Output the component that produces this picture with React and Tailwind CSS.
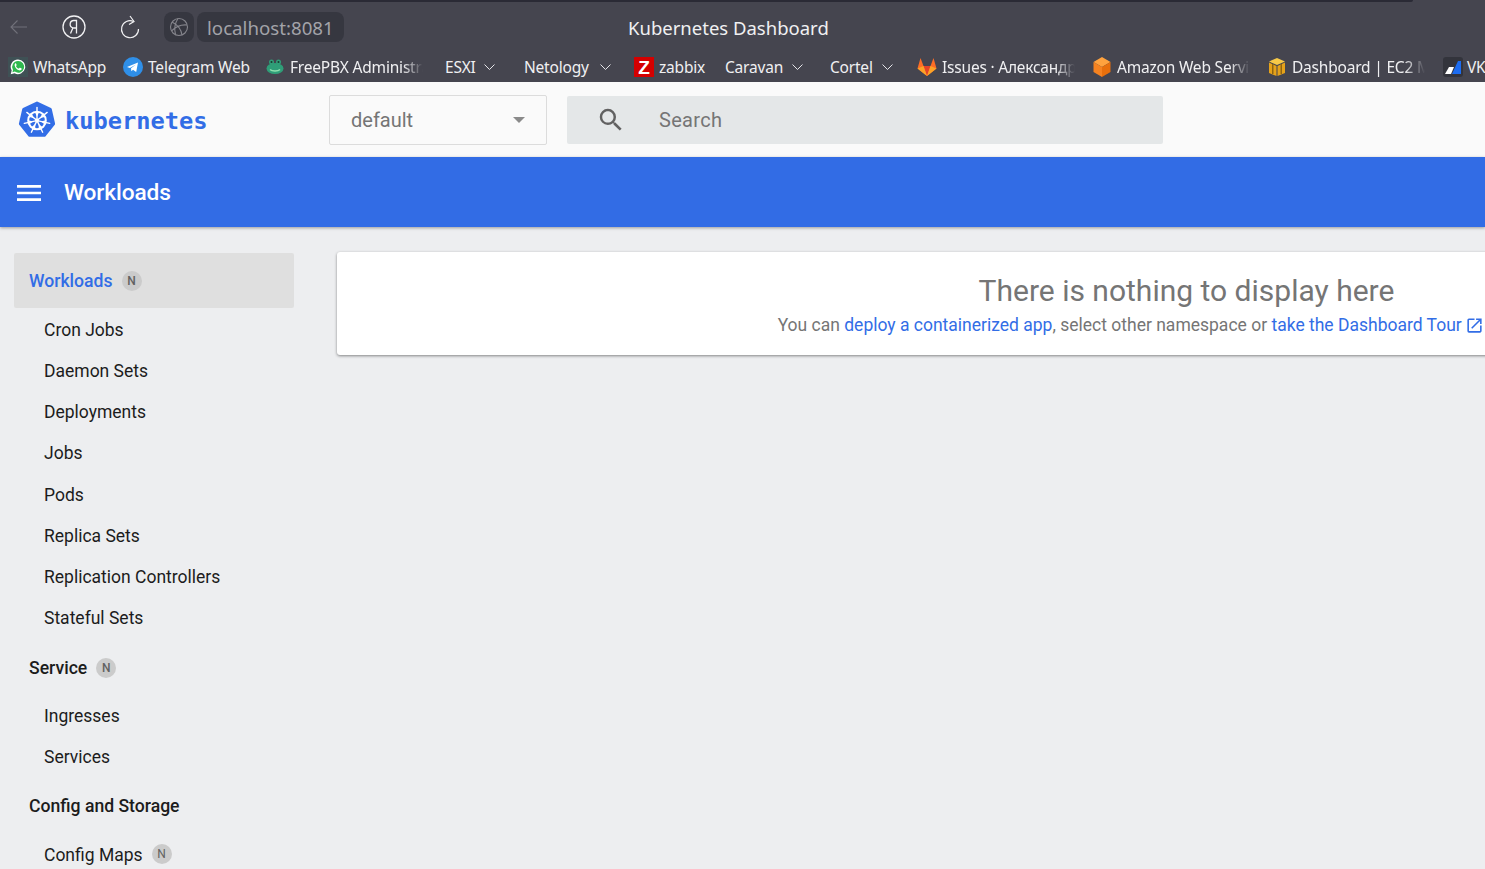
import { MdMenu, MdOpenInNew, MdSearch } from "react-icons/md";

const chromeFont = "font-['Noto_Sans','Open_Sans',sans-serif]";

function WhatsAppIcon() {
  return (
    <svg width="20" height="20" viewBox="0 0 20 20" className="shrink-0 mr-[5px]">
      <rect width="20" height="20" fill="#3f5155" />
      <path d="M10 2.500a7.300 7.300 0 0 0-6.300 11L2.700 17.300l3.900-1A7.300 7.300 0 1 0 10 2.500z" fill="#fff" />
      <path d="M10 3.900a5.900 5.900 0 0 0-5 9l-.6 2.300 2.400-.6A5.900 5.900 0 1 0 10 3.900z" fill="#2fb84f" />
      <path d="M7.600 6.300c-.7.3-1.200 1.300-.8 2.600.6 1.900 2.300 3.800 4.200 4.400 1.300.4 2.400-.2 2.600-1 .1-.4.1-.7 0-.8l-1.500-.8c-.2-.1-.4 0-.5.1l-.6.7c-.1.1-.3.2-.5.1-1-.4-2-1.300-2.500-2.300-.1-.2 0-.3.1-.4l.5-.6c.1-.2.1-.3 0-.5l-.6-1.400c-.1-.2-.2-.2-.4-.2z" fill="#fff" />
    </svg>
  );
}

function TelegramIcon() {
  return (
    <svg width="20" height="20" viewBox="0 0 20 20" className="shrink-0 mr-[5px]">
      <circle cx="10" cy="10" r="10" fill="#2f8fe8" />
      <path d="M4 10l11-4.500-1.800 9.500-3.200-2.300-1.600 1.600-.4-3L13 7.500 6.900 11z" fill="#fff" />
    </svg>
  );
}

function FrogIcon() {
  return (
    <svg width="20" height="20" viewBox="0 0 20 20" className="shrink-0 mr-[5px]">
      <ellipse cx="10" cy="11.500" rx="8.500" ry="5.500" fill="#2f9e78" />
      <circle cx="6.500" cy="5" r="2.500" fill="#2f9e78" />
      <circle cx="13.500" cy="5" r="2.500" fill="#2f9e78" />
      <circle cx="6.500" cy="5" r="1" fill="#173c30" />
      <circle cx="13.500" cy="5" r="1" fill="#173c30" />
      <path d="M5 12.500c2 2 8 2 10 0" stroke="#8fe0b0" strokeWidth="1.500" fill="none" />
    </svg>
  );
}

function ZabbixIcon() {
  return (
    <div className="w-5 h-5 shrink-0 mr-[5px] bg-[#d40000] flex items-center justify-center text-white font-bold text-[19px] leading-none font-['Liberation_Sans',sans-serif]">
      Z
    </div>
  );
}

function GitlabIcon() {
  return (
    <svg width="20" height="20" viewBox="0 0 20 20" className="shrink-0 mr-[5px]">
      <path d="M10 19L.5 11.500 3.500 1l3 8h7l3-8 3 10.500z" fill="#fc6d26" />
      <path d="M10 19L6.500 9h7z" fill="#e24329" />
      <path d="M10 19L.5 11.500 6.500 9z" fill="#fca326" />
      <path d="M10 19l9.500-7.500L13.500 9z" fill="#fca326" />
    </svg>
  );
}

function AwsCube() {
  return (
    <svg width="20" height="20" viewBox="0 0 20 20" className="shrink-0 mr-[5px]">
      <polygon points="10,0 18.500,5 10,10 1.500,5" fill="#ffa23e" />
      <polygon points="1.500,5 10,10 10,20 1.500,15" fill="#f58220" />
      <polygon points="18.500,5 10,10 10,20 18.500,15" fill="#e86f0c" />
    </svg>
  );
}

function BoxIcon() {
  return (
    <svg width="20" height="20" viewBox="0 0 20 20" className="shrink-0 mr-[5px]">
      <polygon points="10,1 18,4.500 10,8 2,4.500" fill="#f7c948" />
      <polygon points="2,5.500 9.500,9 9.500,19 2,16" fill="#e5a21a" />
      <polygon points="18,5.500 10.500,9 10.500,19 18,16" fill="#e5a21a" />
      <rect x="5" y="7" width="1.500" height="10" fill="#8f6410" />
      <rect x="13.500" y="7" width="1.500" height="10" fill="#8f6410" />
    </svg>
  );
}

function VkIcon() {
  return (
    <svg width="20" height="20" viewBox="0 0 20 20" className="shrink-0 mr-[4px]">
      <rect width="20" height="20" rx="3" fill="#33343c" />
      <polygon points="2,17 6,10 11,10 8,17" fill="#fff" />
      <polygon points="9,17 15,4 18,4 18,17" fill="#1d6cf0" />
    </svg>
  );
}

function K8sLogo() {
  const spokes = [0, 51.43, 102.86, 154.29, 205.71, 257.14, 308.57];
  return (
    <svg width="38" height="38" viewBox="0 0 38 38" className="shrink-0 mt-[2px]">
      <polygon
        points="19,2 32.300,8.400 35.600,22.800 26.400,34.300 11.600,34.300 2.400,22.800 5.700,8.400"
        fill="#326de6"
        stroke="#326de6"
        strokeWidth="3"
        strokeLinejoin="round"
      />
      <circle cx="19" cy="19.500" r="8.800" fill="none" stroke="#fff" strokeWidth="2" />
      <circle cx="19" cy="19.500" r="2" fill="#fff" />
      {spokes.map((a) => (
        <g key={a} transform={`rotate(${a} 19 19.500)`}>
          <line x1="19" y1="18" x2="19" y2="6.500" stroke="#fff" strokeWidth="1.400" strokeLinecap="round" />
          <path d="M19 15.500l-2.200-4.500h4.400z" fill="#fff" />
        </g>
      ))}
    </svg>
  );
}

function Caret() {
  return (
    <svg width="11" height="6" viewBox="0 0 11 6" fill="none" stroke="#e4e4e8" strokeWidth="1" className="ml-[9px] shrink-0">
      <path d="M.5.500l5 5 5-5" />
    </svg>
  );
}

function Bookmark({ icon, label, className, textWidth, fade, caret }) {
  return (
    <div className={`flex items-center shrink-0 ${className}`}>
      {icon}
      <span
        className={`whitespace-nowrap pt-[2px] ${textWidth} ${
          fade ? "overflow-hidden [mask-image:linear-gradient(to_right,black_85%,transparent)]" : ""
        }`}
      >
        {label}
      </span>
      {caret && <Caret />}
    </div>
  );
}

function BrowserBar() {
  return (
    <div className={`bg-[#45454f] h-[82px] flex flex-col overflow-hidden ${chromeFont}`}>
      <div className="h-[2px] w-[1413px] bg-[#2a2a35] rounded-br" />
      <div className="h-[50px] flex items-center relative">
        <svg width="20" height="20" viewBox="0 0 20 20" fill="none" stroke="#71717a" strokeWidth="1.100" className="ml-[9px]">
          <path d="M18 10H2M8.500 3.500L2 10l6.500 6.500" />
        </svg>
        <svg width="26" height="26" viewBox="0 0 26 26" fill="none" className="ml-[32px]">
          <circle cx="13" cy="13" r="11" stroke="#f1f1f3" strokeWidth="1.300" />
          <path d="M15.500 19.500V6.500h-2.500a3.700 3.700 0 0 0-1 7.300L9.500 19.500M15.500 14h-3" stroke="#f1f1f3" strokeWidth="1.300" />
        </svg>
        <svg width="22" height="24" viewBox="0 0 22 24" fill="none" stroke="#f1f1f3" strokeWidth="1.200" className="ml-[32px]">
          <path d="M14.500 6.500A8.500 8.500 0 1 0 19.500 14" />
          <path d="M11 1l4 5.500-5 3" />
        </svg>
        <div className="ml-[23px] w-[30px] h-[30px] rounded-lg bg-[#363740] flex items-center justify-center">
          <svg width="20" height="20" viewBox="0 0 20 20" fill="none" stroke="#85858c" strokeWidth="1.100">
            <circle cx="10" cy="10" r="8.500" />
            <path d="M3 5c4 2 9 6 10 13M9 1.500C6 6 5 12 6.500 17.500M18 8c-5-.5-11 1.500-15.500 6" />
          </svg>
        </div>
        <div className="ml-[3px] h-[30px] w-[147px] rounded-lg bg-[#363740] text-[#a3a3a9] text-[18.700px] flex items-center pl-[10px] pt-[2px]">
          localhost:8081
        </div>
        <div className="absolute left-[628px] top-0 h-full flex items-center pt-[2px] text-[#f0f0f2] text-[18.500px]">
          Kubernetes Dashboard
        </div>
      </div>
      <div className="h-[30px] flex items-center text-[15.500px] tracking-[-0.2px] text-[#f0f0f2]">
        <Bookmark className="ml-[8px]" icon={<WhatsAppIcon />} label="WhatsApp" textWidth="w-[74px]" />
        <Bookmark className="ml-[16px]" icon={<TelegramIcon />} label="Telegram Web" textWidth="w-[103px]" />
        <Bookmark className="ml-[14px]" icon={<FrogIcon />} label="FreePBX Administrator" textWidth="w-[133px]" fade />
        <Bookmark className="ml-[22px]" label="ESXI" textWidth="w-[30px]" caret />
        <Bookmark className="ml-[29px]" label="Netology" textWidth="w-[67px]" caret />
        <Bookmark className="ml-[23px]" icon={<ZabbixIcon />} label="zabbix" textWidth="w-[46px]" />
        <Bookmark className="ml-[20px]" label="Caravan" textWidth="w-[58px]" caret />
        <Bookmark className="ml-[27px]" label="Cortel" textWidth="w-[43px]" caret />
        <Bookmark className="ml-[24px]" icon={<GitlabIcon />} label="Issues · Александр Иванов" textWidth="w-[133px]" fade />
        <Bookmark className="ml-[17px]" icon={<AwsCube />} label="Amazon Web Services" textWidth="w-[133px]" fade />
        <Bookmark className="ml-[17px]" icon={<BoxIcon />} label="Dashboard | EC2 Management" textWidth="w-[133px]" fade />
        <Bookmark className="ml-[18px]" icon={<VkIcon />} label="VK Cloud" />
      </div>
    </div>
  );
}

function TopBar() {
  return (
    <div className="bg-[#fafafa] h-[75px] flex items-center">
      <div className="ml-[18px] w-[311px] flex items-center">
        <K8sLogo />
        <span className="ml-[9px] pt-[5px] text-[#326de6] font-bold text-[23.700px] font-['DejaVu_Sans_Mono',monospace]">
          kubernetes
        </span>
      </div>
      <div className="w-[218px] h-[50px] border border-[#dcdcdc] rounded-[2px] flex items-center justify-between pl-[21px] pr-[21px] text-[#757575] text-[20px]">
        default
        <div className="w-0 h-0 border-x-[6px] border-x-transparent border-t-[6px] border-t-[#8a8a8a]" />
      </div>
      <div className="ml-[20px] w-[596px] h-[48px] bg-[#e4e7e8] rounded-[2px] flex items-center text-[#757575] text-[20px] tracking-[0.3px]">
        <MdSearch size={30} className="ml-[29px] text-[#616161]" />
        <span className="ml-[33px]">Search</span>
      </div>
    </div>
  );
}

function BlueBar() {
  return (
    <div className="relative z-10 bg-[#326ce5] h-[70px] flex items-center shadow-[0_1px_3px_rgba(0,0,0,0.35)] text-white">
      <MdMenu size={32} className="ml-[13px] mt-[2px]" />
      <span className="ml-[19px] pt-[2px] text-[22.700px] font-medium tracking-[-0.1px]">Workloads</span>
    </div>
  );
}

function Badge() {
  return (
    <span className="ml-[9px] -mt-[2px] w-5 h-5 rounded-full bg-[#cbcbcb] text-[#616161] text-[12px] flex items-center justify-center">
      N
    </span>
  );
}

function Section({ label, active, badge, className = "" }) {
  return (
    <div
      className={`mx-[14px] w-[280px] shrink-0 flex items-center pl-[15px] rounded-[2px] text-[17.600px] font-medium ${className} ${
        active ? "bg-[#dfdfdf] text-[#326de6]" : "text-[#1c1c1c]"
      }`}
    >
      {label}
      {badge && <Badge />}
    </div>
  );
}

function Item({ label, badge }) {
  return (
    <div className="h-[41.250px] shrink-0 flex items-center pl-[44px] pt-[2px] text-[17.500px] text-[#1c1c1c]">
      {label}
      {badge && <Badge />}
    </div>
  );
}

function Sidebar() {
  const workloads = [
    "Cron Jobs",
    "Daemon Sets",
    "Deployments",
    "Jobs",
    "Pods",
    "Replica Sets",
    "Replication Controllers",
    "Stateful Sets",
  ];
  return (
    <div className="w-[337px] shrink-0 pt-[26px] flex flex-col">
      <Section label="Workloads" active badge className="h-[55px] pt-[2px]" />
      {workloads.map((w) => (
        <Item key={w} label={w} />
      ))}
      <Section label="Service" badge className="h-[55px] mt-px pt-[4px]" />
      <Item label="Ingresses" />
      <Item label="Services" />
      <Section label="Config and Storage" className="h-[56px] mt-px pt-[2px]" />
      <Item label="Config Maps" badge />
    </div>
  );
}

export default function App() {
  return (
    <div className="h-[869px] w-[1485px] overflow-hidden bg-[#edeef0] flex flex-col font-['Roboto',sans-serif]">
      <BrowserBar />
      <TopBar />
      <BlueBar />
      <div className="flex flex-1 min-h-0">
        <Sidebar />
        <div className="pt-[25px]">
          <div className="w-[1699px] h-[103px] bg-white rounded-[3px] shadow-[0_1px_3px_rgba(0,0,0,0.45)] flex flex-col items-center pt-[20px]">
            <div className="text-[30px] leading-[38px] text-[#757575]">There is nothing to display here</div>
            <div className="mt-[3px] text-[17.500px] leading-[24px] text-[#757575] flex items-center">
              <span className="whitespace-pre">You can </span>
              <span className="text-[#326de6]">deploy a containerized app</span>
              <span className="whitespace-pre">, select other namespace or </span>
              <span className="text-[#326de6]">take the Dashboard Tour</span>
              <MdOpenInNew size={19} className="ml-[3px] text-[#326de6]" />
              <span className="whitespace-pre pr-[4px]"> to learn more</span>
            </div>
          </div>
        </div>
      </div>
    </div>
  );
}
